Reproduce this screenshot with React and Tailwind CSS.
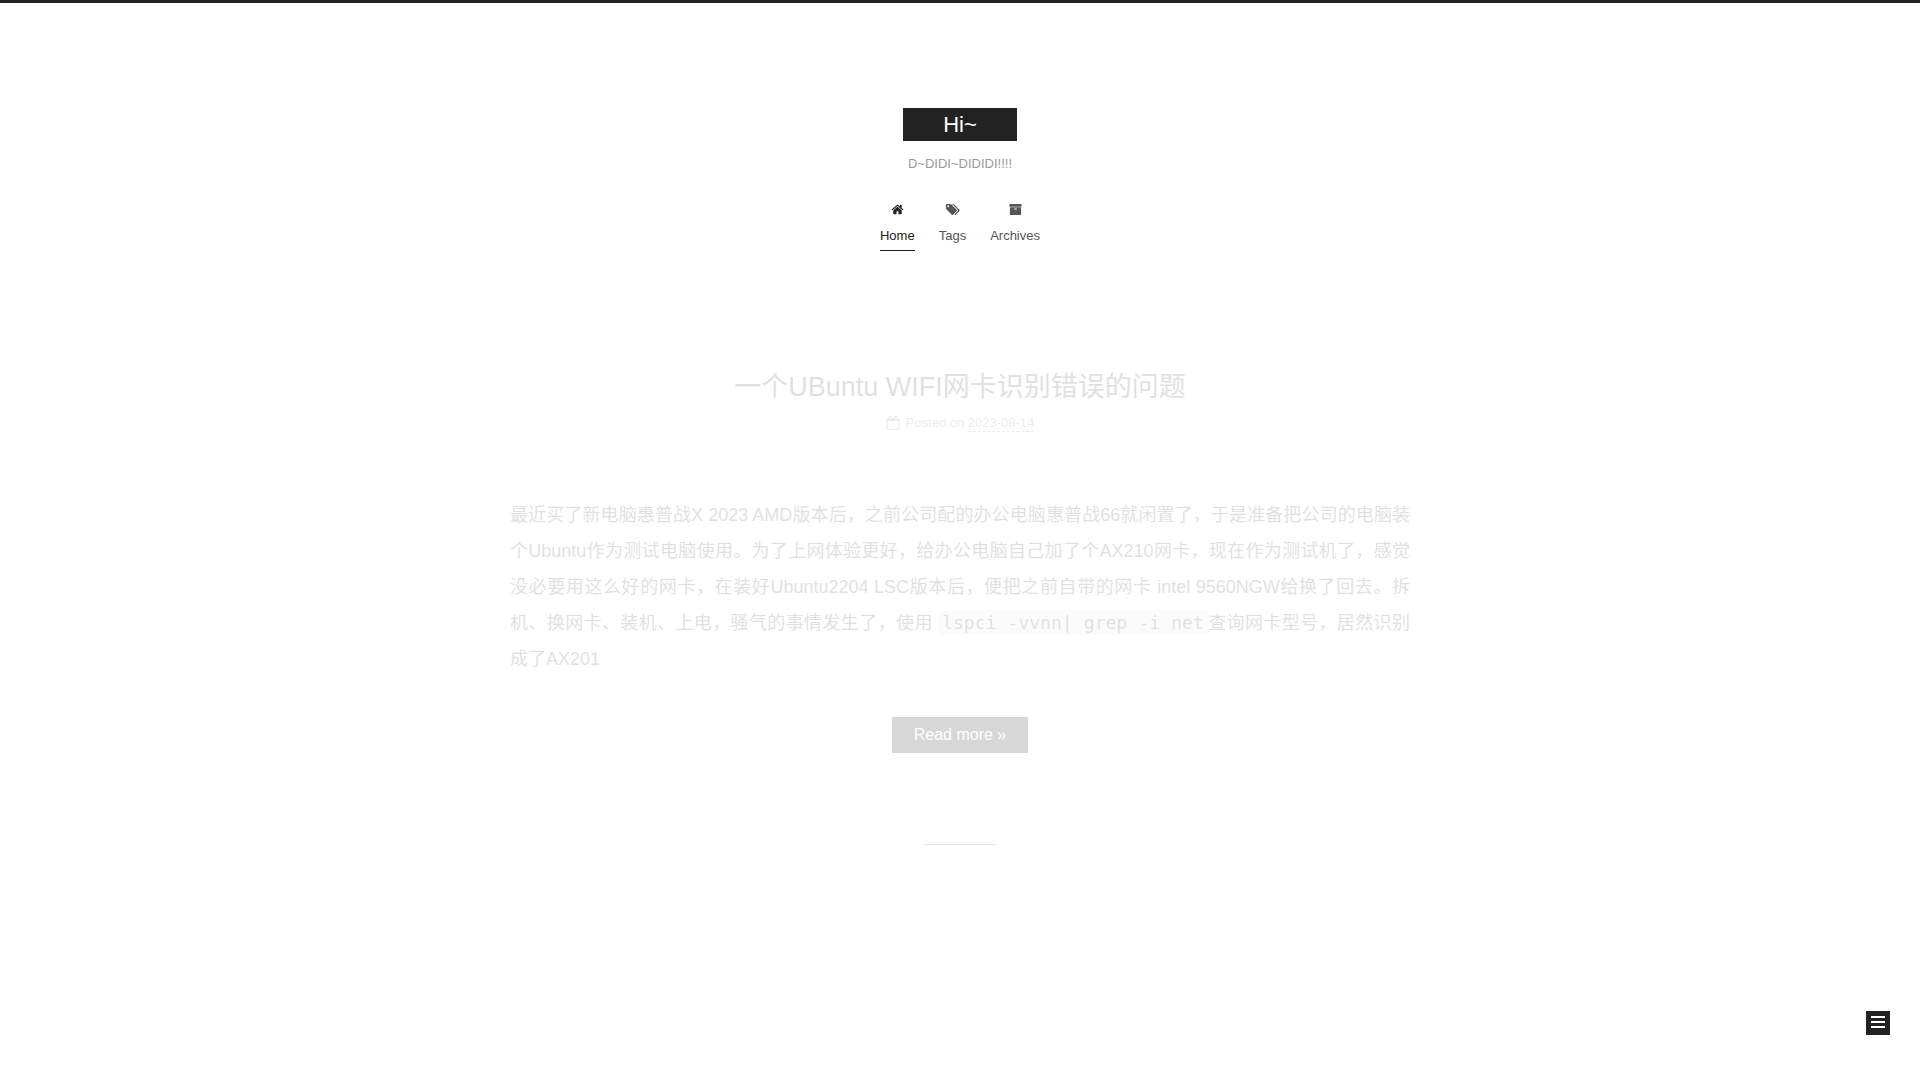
import { useState } from "react";

const icons = {
  home: "M1472 992v480q0 26-19 45t-45 19h-384v-384h-256v384h-384q-26 0-45-19t-19-45v-480q0-1 .5-3t.5-3l575-474 575 474q1 2 1 6zm223-69l-62 74q-8 9-21 11h-3q-13 0-21-7l-692-577-692 577q-12 8-24 7-13-2-21-11l-62-74q-8-10-7-23.5t11-21.5l719-599q32-26 76-26t76 26l244 204v-195q0-14 9-23t23-9h192q14 0 23 9t9 23v408l219 182q10 8 11 21.5t-7 23.5z",
  tags: "M576 448q0-53-37.5-90.5t-90.5-37.5-90.5 37.5-37.5 90.5 37.5 90.5 90.5 37.5 90.5-37.5 37.5-90.5zm1067 576q0 53-37 90l-491 492q-39 37-91 37-53 0-90-37l-715-716q-38-37-64.5-101t-26.5-117v-416q0-52 38-90t90-38h416q53 0 117 26.5t102 64.5l715 714q37 39 37 91zm384 0q0 53-37 90l-491 492q-39 37-91 37-36 0-59-14t-53-45l470-470q37-37 37-90 0-52-37-91l-715-714q-38-38-102-64.5t-117-26.5h224q53 0 117 26.5t102 64.5l715 714q37 39 37 91z",
  archive:
    "M1088 832q0-26-19-45t-45-19h-256q-26 0-45 19t-19 45 19 45 45 19h256q26 0 45-19t19-45zm576-192v960q0 26-19 45t-45 19h-1408q-26 0-45-19t-19-45v-960q0-26 19-45t45-19h1408q26 0 45 19t19 45zm64-448v256q0 26-19 45t-45 19h-1536q-26 0-45-19t-19-45v-256q0-26 19-45t45-19h1536q26 0 45 19t19 45z",
  calendar:
    "M192 1664h1408v-1024h-1408v1024zm384-1216v-288q0-14-9-23t-23-9h-64q-14 0-23 9t-9 23v288q0 14 9 23t23 9h64q14 0 23-9t9-23zm768 0v-288q0-14-9-23t-23-9h-64q-14 0-23 9t-9 23v288q0 14 9 23t23 9h64q14 0 23-9t9-23zm384-64v1280q0 52-38 90t-90 38h-1408q-52 0-90-38t-38-90v-1280q0-52 38-90t90-38h128v-96q0-66 47-113t113-47h64q66 0 113 47t47 113v96h384v-96q0-66 47-113t113-47h64q66 0 113 47t47 113v96h128q52 0 90 38t38 90z",
};

const menu = [
  { name: "Home", icon: "home" },
  { name: "Tags", icon: "tags" },
  { name: "Archives", icon: "archive" },
];

function Icon({ name, className }) {
  // the tags glyph is wider than the others
  const width = name === "tags" ? 2048 : 1792;
  return (
    <svg
      viewBox={`0 0 ${width} 1792`}
      fill="currentColor"
      aria-hidden="true"
      className={className}
    >
      <path d={icons[name]} />
    </svg>
  );
}

function Header({ active, setActive }) {
  return (
    <header className="flex flex-col items-center pt-[105px]">
      <a
        href="#"
        className="bg-[#222] px-10 text-[22px] leading-[33px] text-white"
      >
        Hi~
      </a>
      <p className="mt-3 text-[13px] leading-[22px] text-[#999]">
        D~DIDI~DIDIDI!!!!
      </p>
      <nav className="mt-5 flex gap-6 text-[13px]">
        {menu.map((item) => (
          <a
            key={item.name}
            href="#"
            onClick={() => setActive(item.name)}
            className={
              active === item.name
                ? "flex flex-col items-center border-b border-[#222] pt-2 text-[#222]"
                : "flex flex-col items-center border-b border-transparent pt-2 text-[#555]"
            }
          >
            <Icon name={item.icon} className="h-[13px]" />
            <span className="mt-1.5 leading-7">{item.name}</span>
          </a>
        ))}
      </nav>
    </header>
  );
}

function Post() {
  return (
    <article>
      <div className="flex flex-col items-center text-[#555] opacity-[0.175]">
        <h1 className="text-[27px] leading-10">
          <a href="#">一个UBuntu WIFI网卡识别错误的问题</a>
        </h1>
        <div className="mt-2 flex items-center text-[13px] leading-4 text-[#999]">
          <Icon name="calendar" className="mr-1.5 h-[14px]" />
          <span>Posted on&nbsp;</span>
          <time
            dateTime="2023-08-14"
            className="-mb-px border-b border-dashed border-[#999]"
          >
            2023-08-14
          </time>
        </div>
        <p className="mt-[66px] w-full text-justify text-lg leading-9">
          最近买了新电脑惠普战X 2023
          AMD版本后，之前公司配的办公电脑惠普战66就闲置了，于是准备把公司的电脑装个Ubuntu作为测试电脑使用。为了上网体验更好，给办公电脑自己加了个AX210网卡，现在作为测试机了，感觉没必要用这么好的网卡，在装好Ubuntu2204
          LSC版本后，便把之前自带的网卡 intel
          9560NGW给换了回去。拆机、换网卡、装机、上电，骚气的事情发生了，使用{" "}
          <code className="rounded-sm bg-[#eee] px-1 py-[2px] font-['DejaVu_Sans_Mono',monospace]">
            lspci -vvnn| grep -i net
          </code>
          查询网卡型号，居然识别成了AX201
        </p>
        <a
          href="#"
          className="mt-10 border-2 border-[#222] bg-[#222] px-5 text-base leading-8 text-white"
        >
          Read more »
        </a>
      </div>
      <hr className="mx-auto mt-[91px] w-[8%] border-[#e4e4e4]" />
    </article>
  );
}

export default function App() {
  const [active, setActive] = useState("Home");
  const [open, setOpen] = useState(false);

  return (
    <div className="min-h-screen border-t-[3px] border-[#222] bg-white font-['Liberation_Sans','Noto_Sans_CJK_SC',sans-serif]">
      <Header active={active} setActive={setActive} />
      <main className="mx-auto mt-[116px] max-w-[900px]">
        <Post />
      </main>
      {/* sidebar toggle */}
      <button
        type="button"
        aria-label="Toggle sidebar"
        aria-expanded={open}
        onClick={() => setOpen(!open)}
        className="fixed right-[30px] bottom-[45px] flex size-6 flex-col items-center gap-[3px] bg-[#222] pt-[5px]"
      >
        <span className="h-[2px] w-[14px] bg-white" />
        <span className="h-[2px] w-[14px] bg-white" />
        <span className="h-[2px] w-[14px] bg-white" />
      </button>
    </div>
  );
}
